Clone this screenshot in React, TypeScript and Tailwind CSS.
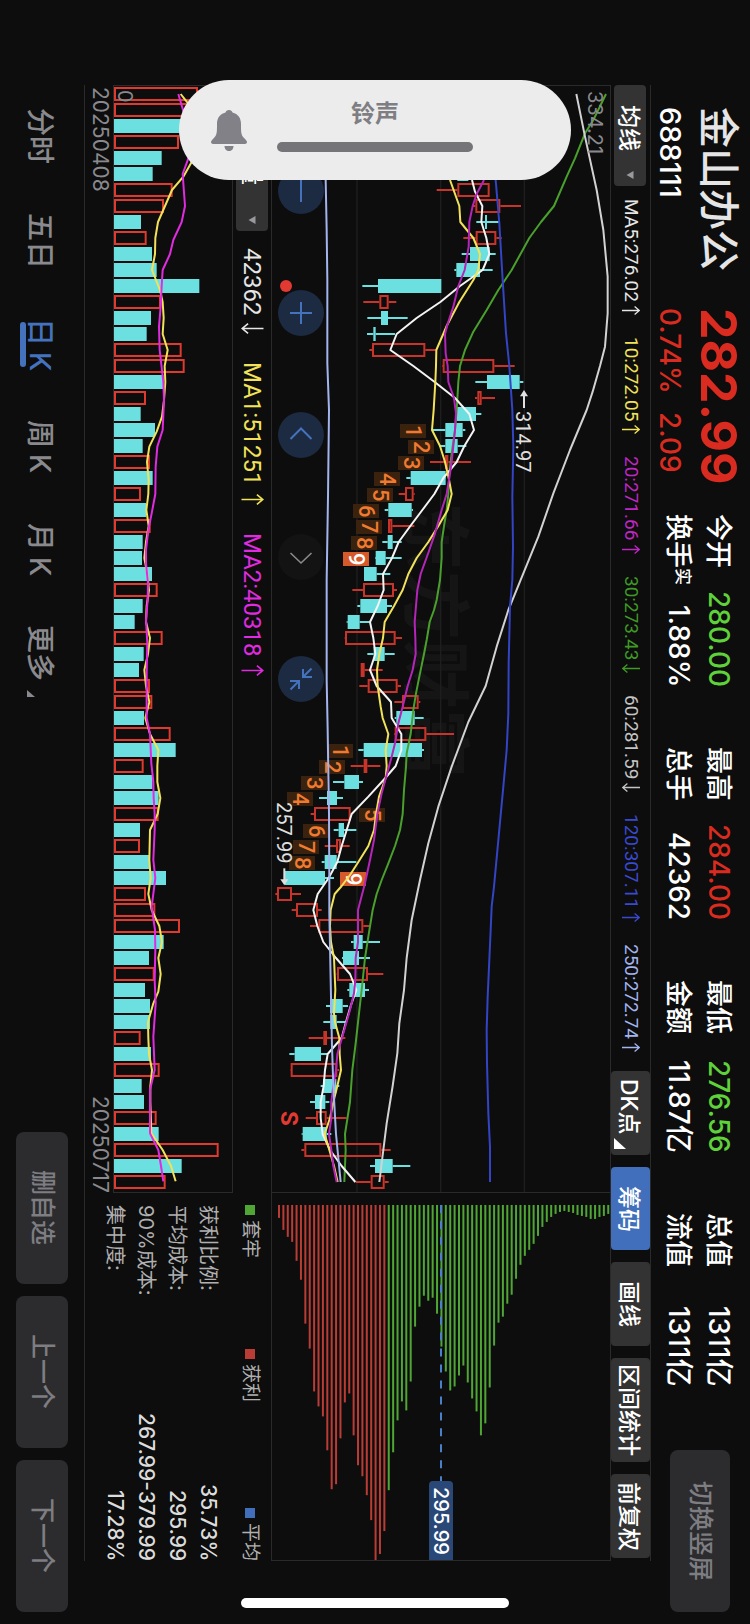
import React from "react";

type Kind = "up" | "down";
type Candle = [Kind, number, number, number, number, number];

// kind, low wick, body start, body end, high wick, volume edge
const candles: Candle[] = [
  ["up", 600, 610, 640, 650, 324],
  ["up", 600, 610, 640, 650, 330],
  ["down", 600, 610, 640, 650, 300],
  ["up", 600, 610, 640, 650, 267],
  ["down", 600, 610, 640, 650, 215],
  ["down", 592, 592, 625, 625, 188],
  ["up", 530, 592, 689, 689, 248],
  ["up", 638, 646, 721, 783, 222],
  ["down", 649, 675, 681, 720, 153],
  ["up", 610, 647, 709, 725, 170],
  ["down", 605, 630, 689, 707, 186],
  ["down", 583, 589, 660, 698, 200],
  ["down", 307, 354, 544, 544, 328],
  ["up", 310, 358, 386, 409, 213],
  ["down", 322, 363, 384, 443, 183],
  ["down", 321, 340, 347, 405, 170],
  ["up", 328, 336, 496, 530, 275],
  ["up", 546, 548, 703, 764, 284],
  ["down", 646, 681, 779, 790, 220],
  ["up", 645, 652, 665, 705, 168],
  ["down", 585, 590, 648, 664, 152],
  ["down", 516, 556, 608, 616, 195],
  ["down", 537, 556, 593, 619, 158],
  ["up", 510, 555, 565, 633, 180],
  ["down", 439, 452, 557, 558, 188],
  ["up", 416, 435, 461, 464, 153],
  ["down", 374, 385, 455, 459, 168],
  ["up", 384, 384, 397, 463, 182],
  ["down", 367, 383, 398, 425, 158],
  ["down", 345, 347, 377, 425, 156],
  ["down", 312, 312, 350, 391, 186],
  ["up", 277, 309, 402, 411, 203],
  ["down", 292, 301, 381, 396, 158],
  ["down", 260, 263, 299, 328, 134],
  ["up", 254, 255, 407, 426, 218],
  ["down", 322, 341, 374, 404, 161],
  ["up", 302, 302, 314, 368, 147],
  ["up", 298, 323, 413, 423, 180],
  ["up", 403, 426, 476, 481, 187],
  ["down", 404, 409, 464, 491, 162],
  ["up", 402, 404, 499, 582, 242],
  ["down", 295, 311, 486, 492, 257],
  ["up", 272, 311, 322, 361, 161],
  ["down", 219, 253, 297, 309, 187],
  ["down", 177, 201, 231, 249, 206],
  ["up", 152, 162, 272, 273, 206],
  ["down", 221, 236, 252, 289, 150],
  ["up", 194, 228, 243, 269, 150],
  ["down", 185, 194, 230, 289, 177],
  ["down", 72, 75, 195, 222, 228],
  ["up", 46, 51, 96, 123, 168],
  ["up", 95, 108, 174, 185, 196],
  ["up", 150, 175, 310, 328, 270],
  ["down", 273, 281, 308, 360, 221],
  ["down", 246, 249, 297, 330, 177],
  ["up", 230, 231, 324, 370, 194],
  ["down", 262, 268, 315, 327, 165],
  ["down", 198, 210, 248, 264, 180],
  ["down", 190, 211, 230, 258, 180],
  ["up", 146, 190, 201, 256, 152],
  ["down", 88, 104, 183, 202, 183],
  ["up", 91, 92, 232, 238, 209],
  ["down", 182, 189, 229, 238, 155],
  ["down", 150, 165, 196, 208, 162],
  ["up", 137, 168, 200, 260, 200],
  ["down", 125, 128, 200, 214, 206],
  ["up", 124, 133, 364, 392, 386],
  ["down", 330, 345, 398, 451, 275],
  ["up", 287, 332, 374, 386, 227],
];

const volumeDownAt = new Set([36]);

const averages = [
  {
    color: "#4aa02c",
    points:
      "1038,42 1000,120 975,160 945,235 920,290 882,378 843,426 808,474 755,570 715,630 680,690 640,755 615,810 600,858 595,906 590,990 585,1050 575,1120 568,1180 565,1242 560,1290 552,1338 545,1386 545,1434 540,1500 530,1560 522,1590 509,1626 500,1680 492,1722 478,1790 468,1840 460,1890 452,1962 440,2020 438,2060 432,2130 428,2202 420,2250 405,2298 385,2350 365,2400 350,2442 338,2490 325,2570 315,2634 305,2730 297,2800 287,2890 277,2970 270,3066 255,3162 257,3210 253,3306",
  },
  {
    color: "#d2d2d2",
    points:
      "949,42 975,170 1010,330 1030,450 1043,590 1043,700 1035,800 1020,858 998,935 980,990 930,1110 880,1240 835,1370 790,1480 745,1590 710,1700 677,1818 625,1926 575,2060 535,2180 505,2290 480,2400 455,2520 440,2634 432,2730 418,2830 412,2920 398,3018 380,3130 370,3210 358,3306",
  },
  {
    color: "#f4f4f4",
    points:
      "636,300 645,335 667,378 664,426 679,474 688,522 668,570 600,618 541,666 470,714 410,762 391,810 460,858 524,906 585,954 628,1002 642,1050 613,1098 590,1146 550,1194 523,1242 487,1290 451,1338 416,1386 396,1434 369,1482 371,1530 353,1578 330,1626 340,1674 346,1722 330,1770 350,1818 393,1866 395,1914 424,1962 424,2010 407,2058 376,2094 325,2150 275,2202 260,2250 245,2298 232,2346 206,2394 173,2442 160,2490 172,2538 190,2586 228,2634 270,2682 289,2730 272,2778 258,2826 245,2874 203,2922 195,2970 191,3018 182,3066 182,3114 188,3162 210,3210 245,3258 286,3306",
  },
  {
    color: "#f2e25a",
    points:
      "570,300 598,378 601,426 640,474 660,522 655,570 640,600 598,666 560,738 529,810 528,858 526,906 521,990 516,1050 540,1098 555,1146 566,1194 575,1242 563,1290 535,1338 505,1386 470,1434 445,1482 428,1530 402,1578 374,1626 369,1674 358,1722 351,1770 353,1818 362,1880 368,1914 385,1962 377,2010 380,2058 377,2094 357,2150 348,2202 342,2250 325,2298 295,2346 270,2385 245,2418 224,2442 212,2490 210,2538 213,2586 222,2634 226,2730 222,2800 225,2826 238,2874 239,2922 243,2970 232,3018 223,3054 210,3114 194,3162 208,3210 222,3258 233,3306",
  },
  {
    color: "#b425b8",
    points:
      "672,300 650,342 638,378 628,426 626,500 614,570 595,618 580,680 562,735 555,762 557,820 563,858 565,906 582,954 588,1000 585,1050 580,1098 575,1146 570,1180 560,1242 545,1290 525,1360 508,1410 482,1482 472,1530 468,1578 464,1626 466,1674 467,1722 458,1770 443,1818 428,1880 415,1930 405,1990 395,2030 380,2085 365,2140 352,2202 342,2280 330,2340 315,2410 294,2490 294,2538 294,2586 287,2634 286,2700 282,2740 270,2790 247,2870 232,2922 228,2970 220,3018 214,3066 214,3114 207,3162 214,3210 220,3258 230,3306",
  },
  {
    color: "#3344c4",
    points:
      "707,300 718,430 728,600 738,760 748,858 757,990 760,1100 757,1250 759,1400 757,1500 750,1580 746,1750 745,1900 740,2010 730,2120 715,2280 702,2420 695,2480 692,2550 683,2750 680,2850 681,2950 685,3100 690,3200 690,3306",
  },
  {
    color: "#a3b4ee",
    points:
      "197,300 200,450 202,600 202,850 207,990 204,1250 200,1500 200,1800 203,1950 207,2200 208,2400 208,2500 212,2700 216,2900 220,3018 228,3162 242,3306",
  },
];

const volumeAverages = [
  {
    color: "#f2e25a",
    points:
      "272,42 290,65 330,110 330,180 305,246 280,290 246,330 225,378 204,426 196,474 195,522 186,570 210,630 218,666 221,714 218,762 233,810 224,858 226,906 222,960 216,1010 200,1055 178,1100 171,1146 176,1200 175,1242 169,1290 176,1338 168,1386 163,1434 172,1482 177,1530 170,1578 168,1626 180,1674 174,1722 163,1770 168,1818 178,1866 166,1914 180,1962 205,2010 202,2058 202,2106 211,2154 203,2202 180,2250 178,2340 182,2394 175,2442 185,2490 208,2538 216,2586 205,2634 212,2682 205,2735 190,2770 174,2826 175,2874 177,2922 186,2970 181,3018 181,3066 184,3160 218,3210 243,3258 257,3304",
  },
  {
    color: "#e02be0",
    points:
      "265,42 285,110 310,160 297,230 278,282 285,378 275,426 250,480 240,522 218,570 215,618 212,680 207,740 209,810 220,906 222,960 218,1050 202,1100 197,1160 196,1242 185,1300 175,1350 168,1410 168,1450 174,1510 173,1560 168,1620 172,1690 170,1780 170,1914 180,1962 184,2050 190,2106 191,2154 194,2202 194,2250 190,2340 196,2394 185,2480 195,2550 196,2610 194,2700 197,2770 190,2870 194,2970 180,3030 180,3160 205,3210 213,3258 220,3304",
  },
];

const chips = [
  13, 25, 32, 37, 56, 75, 119, 144, 187, 202, 212, 246, 285, 280, 234, 198, 189, 231, 261, 272,
  291, 316, 356, 350, 327, 286, 248, 216, 197, 206, 177, 122, 102, 91, 96, 93, 109, 142, 167, 186,
  182, 171, 161, 178, 194, 207, 231, 219, 183, 141, 118, 112, 99, 90, 74, 60, 51, 45, 39, 31, 22,
  17, 12, 9, 7, 6, 7, 8, 10, 11, 12, 14, 14, 12, 11, 9,
];
const profitBars = 25;

// digit, left edge in chart units, candle index
const countMarks: [string, number, number][] = [
  ["1", 421, 21],
  ["2", 443, 22],
  ["3", 415, 23],
  ["4", 343, 24],
  ["5", 321, 25],
  ["6", 278, 26],
  ["7", 288, 27],
  ["8", 272, 28],
  ["9", 249, 29],
  ["1", 200, 41],
  ["2", 176, 42],
  ["3", 123, 43],
  ["4", 82, 44],
  ["5", 297, 45],
  ["6", 130, 46],
  ["7", 98, 47],
  ["8", 88, 48],
  ["9", 241, 49],
];

const rowY = (i: number) => 42 + 48 * i;

function Arrow({ dir, className }: { dir: "up" | "down"; className: string }) {
  return (
    <svg viewBox="0 0 18 9" className={className} fill="none" stroke="currentColor" strokeWidth="1.3">
      {dir === "up" ? <path d="M0 4.5H17.4M12.6 .5L17.4 4.5L12.6 8.5" /> : <path d="M18 4.5H.6M5.4 .5L.6 4.5L5.4 8.5" />}
    </svg>
  );
}

function Quote({ label, note, value, tone }: { label: string; note?: string; value: string; tone?: string }) {
  return (
    <div className="flex flex-row items-center justify-between">
      <dt className="flex flex-row items-start pr-0.5 text-[27px] leading-[26px] font-medium">
        {label}
        {note && <span className="text-[17px] leading-[17px]">{note}</span>}
      </dt>
      <dd className={`text-[28px] leading-[28px] font-medium ${tone ?? "text-white"}`}>{value}</dd>
    </div>
  );
}

function Header() {
  return (
    <header className="flex w-[99px] shrink-0 flex-row items-start pt-[107px] pb-3 text-white">
      <div className="flex h-[201px] flex-col gap-[14px] pr-[11px]">
        <h1 className="text-[41px] leading-[40px] font-medium text-[#e5e5e5]">金山办公</h1>
        <p className="text-[29px] leading-[30px] font-medium">688111</p>
      </div>
      <div className="flex h-[206px] flex-col gap-[14px] pr-[11px] text-[#d92b1f]">
        <p className="text-[50px] leading-[40px] font-bold">282.99</p>
        <p className="flex flex-row gap-[18px] text-[28px] leading-[30px] font-medium">
          <span>0.74%</span>
          <span>2.09</span>
        </p>
      </div>
      <dl className="grid flex-1 grid-cols-4 gap-[60px] pr-[17px]">
        <div className="flex flex-col gap-3">
          <Quote label="今开" value="280.00" tone="text-[#5fd13a]" />
          <Quote label="换手" note="实" value="1.88%" />
        </div>
        <div className="flex flex-col gap-3">
          <Quote label="最高" value="284.00" tone="text-[#d92b1f]" />
          <Quote label="总手" value="42362" />
        </div>
        <div className="flex flex-col gap-3">
          <Quote label="最低" value="276.56" tone="text-[#5fd13a]" />
          <Quote label="金额" value="11.87亿" />
        </div>
        <div className="flex flex-col gap-3">
          <Quote label="总值" value="1311亿" />
          <Quote label="流值" value="1311亿" />
        </div>
      </dl>
      <button className="mt-16 mr-5 h-[162px] w-[60px] rounded-lg bg-[#2c2c2e] text-[25px] font-medium text-[#7d7d82]">
        切换竖屏
      </button>
    </header>
  );
}

function Picker({ label, option, size }: { label: string; option: string; size: string }) {
  return (
    <div className="relative mr-px">
      <select
        aria-label={label}
        className={`block w-8 appearance-none rounded bg-[#333] pr-0.5 pb-4 text-center text-[23px] leading-[30px] font-medium text-white ${size}`}
      >
        <option>{option}</option>
      </select>
      <svg viewBox="0 0 8 8" className="absolute bottom-[7px] left-3 size-2" fill="#9a9a9e">
        <path d="M.5 4L7.5 0V8Z" />
      </svg>
    </div>
  );
}

const maList: [string, "up" | "down", string][] = [
  ["MA5:276.02", "up", "text-[#e6e6e6]"],
  ["10:272.05", "up", "text-[#f2e25a]"],
  ["20:271.66", "up", "text-[#c026c4]"],
  ["30:273.43", "down", "text-[#3f9a25]"],
  ["60:281.59", "down", "text-[#c4c4c4]"],
  ["120:307.11", "up", "text-[#3a4ad0]"],
  ["250:272.74", "up", "text-[#a3b4ee]"],
];

function Toolbar() {
  const tool = "w-[39px] rounded pr-1 text-[23px] leading-[34px] font-medium text-white";
  return (
    <div className="flex w-10 shrink-0 flex-row items-center border-r border-[#2a2a2a] pb-[3px]">
      <Picker label="主图指标" option="均线" size="h-[101px]" />
      <ul className="mt-[13px] flex flex-row gap-[22px] font-['Roboto','Noto_Sans_CJK_SC',sans-serif] text-[19px] leading-[24px] whitespace-nowrap">
        {maList.map(([text, dir, tone]) => (
          <li key={text} className={`flex flex-row items-center gap-1 ${tone}`}>
            {text}
            <Arrow dir={dir} className="h-[9px] w-[18px]" />
          </li>
        ))}
      </ul>
      <div className="mt-auto flex flex-row gap-3">
        <button className={`${tool} relative h-[84px] bg-[#333] pb-3`}>
          DK点
          <svg viewBox="0 0 12 11" className="absolute bottom-1.5 left-[3px] h-[11px] w-3" fill="#fff">
            <path d="M0 0V11H12Z" />
          </svg>
        </button>
        <button className={`${tool} h-[83px] bg-[#416fbb]`}>筹码</button>
        <button className={`${tool} h-[84px] bg-[#333]`}>画线</button>
        <button className={`${tool} h-[104px] bg-[#333]`}>区间统计</button>
        <button className={`${tool} h-[84px] bg-[#333]`}>前复权</button>
      </div>
    </div>
  );
}

function Bar({ kind, x, y, w, color }: { kind: Kind; x: number; y: number; w: number; color: string }) {
  return kind === "down" ? (
    <rect x={x} y={y - 21} width={w} height="42" fill="#6ce0e0" />
  ) : (
    <rect x={x + 3} y={y - 18} width={Math.max(w - 6, 1)} height="36" fill="none" stroke={color} strokeWidth="6" />
  );
}

const roundControl = "flex size-[46px] items-center justify-center rounded-full";

function PriceChart() {
  return (
    <div className="relative w-[340px] shrink-0 border border-[#2a2a2a]">
      <p className="absolute top-[416px] left-[130px] font-['Noto_Sans_CJK_SC',sans-serif] text-[69px] leading-[76px] font-bold whitespace-nowrap text-[#151515]">
        东方财富
      </p>
      <svg viewBox="36 18 1014 3318" preserveAspectRatio="none" className="absolute inset-0 size-full">
        <path d="M291 18V3336M542 18V3336M793 18V3336" stroke="#1e1e1e" strokeWidth="4" />
        {candles.map(([kind, lo, a, b, hi], i) => {
          const y = rowY(i);
          const c = "#c8342a";
          const fill = kind === "up" ? c : "#6ce0e0";
          return (
            <g key={i}>
              {a > lo && <rect x={lo} y={y - 3} width={a - lo} height="6" fill={fill} />}
              {hi > b && <rect x={b} y={y - 3} width={hi - b} height="6" fill={fill} />}
              <Bar kind={kind} x={a} y={y} w={b - a} color={c} />
            </g>
          );
        })}
      </svg>
      {countMarks.map(([digit, left, i]) => (
        <span
          key={i}
          className={`absolute flex h-[14px] w-[26px] items-center justify-center font-['Roboto',sans-serif] text-[22px] leading-[26px] font-medium ${
            digit === "9" ? "bg-[#d6592a] text-white" : "bg-[#3a220f] text-[#f07a30]"
          }`}
          style={{ left: (left - 36) / 3, top: (rowY(i) - 18 - 17) / 3 }}
        >
          {digit}
        </span>
      ))}
      <svg viewBox="36 18 1014 3318" preserveAspectRatio="none" className="absolute inset-0 size-full" fill="none">
        {averages.map((line) => (
          <polyline key={line.color} points={line.points} stroke={line.color} strokeWidth="6" strokeLinejoin="round" />
        ))}
        <g stroke="#e0e0e0" strokeWidth="6">
          <path d="M792 984V945" />
          <path d="M73 2365V2404" />
        </g>
        <path d="M792 930L804 949H780ZM73 2416L85 2398H61Z" fill="#e0e0e0" />
        <circle cx="78" cy="618" r="18" fill="#e23a32" />
      </svg>
      <span className="absolute top-[5px] right-[3px] text-[20px] leading-[24px] text-[#8a8a8e]">334.21</span>
      <span className="absolute top-[325px] left-[239px] font-['Roboto',sans-serif] text-[20px] leading-[24px] text-[#e0e0e0]">
        314.97
      </span>
      <span className="absolute top-[716px] left-0 font-['Roboto',sans-serif] text-[20px] leading-[24px] text-[#e0e0e0]">
        257.99
      </span>
      <span className="absolute top-[1025px] left-1 font-['Roboto',sans-serif] text-[24px] leading-[26px] font-bold text-[#e23a32]">
        S
      </span>
      <div className="absolute top-[82px] left-1.5 flex flex-row gap-[76px] text-[#4472bd]">
        <button aria-label="缩小" className={`${roundControl} bg-[#1c2a42]`}>
          <svg viewBox="0 0 24 24" className="size-6" fill="none" stroke="currentColor" strokeWidth="2">
            <path d="M12 1V23" />
          </svg>
        </button>
        <button aria-label="放大" className={`${roundControl} bg-[#1c2a42]`}>
          <svg viewBox="0 0 24 24" className="size-6" fill="none" stroke="currentColor" strokeWidth="2">
            <path d="M12 1V23M1 12H23" />
          </svg>
        </button>
        <button aria-label="左移" className={`${roundControl} bg-[#1c2a42]`}>
          <svg viewBox="0 0 24 24" className="size-6" fill="none" stroke="currentColor" strokeWidth="2">
            <path d="M1.500 16L12 5.500L22.500 16" />
          </svg>
        </button>
        <button aria-label="右移" className={`${roundControl} bg-[#131313] text-[#8a8a8e]`}>
          <svg viewBox="0 0 24 24" className="size-6" fill="none" stroke="currentColor" strokeWidth="1.600">
            <path d="M1.500 8L12 18L22.500 8" />
          </svg>
        </button>
        <button aria-label="收起" className={`${roundControl} bg-[#1c2a42]`}>
          <svg viewBox="0 0 24 24" className="size-6" fill="none" stroke="currentColor" strokeWidth="2">
            <path d="M22.500 1.500L14 10M14 2V10H23M1.500 22.500L10 14M10 22V14H1" />
          </svg>
        </button>
      </div>
    </div>
  );
}

function VolumeInfo() {
  return (
    <div className="flex w-[38px] shrink-0 flex-row items-center font-['Roboto','Noto_Sans_CJK_SC',sans-serif] text-[24px] leading-[30px]">
      <Picker label="副图指标" option="成交量" size="h-[146px]" />
      <ul className="mt-[17px] flex flex-row gap-7 whitespace-nowrap">
        <li className="flex flex-row items-center gap-2 text-[#e6e6e6]">
          42362
          <Arrow dir="down" className="h-[11px] w-[23px]" />
        </li>
        <li className="flex flex-row items-center gap-2 text-[#f2e25a]">
          MA1:51251
          <Arrow dir="up" className="h-[11px] w-[23px]" />
        </li>
        <li className="flex flex-row items-center gap-2 text-[#e02be0]">
          MA2:40318
          <Arrow dir="up" className="h-[11px] w-[23px]" />
        </li>
      </ul>
    </div>
  );
}

function VolumeChart() {
  return (
    <div className="relative w-[120px] shrink-0 border border-[#2a2a2a]">
      <svg viewBox="72 18 354 3318" preserveAspectRatio="none" className="absolute inset-0 size-full" fill="none">
        {candles.map(([kind, , , , , edge], i) => (
          <Bar key={i} kind={volumeDownAt.has(i) ? "down" : kind} x={72} y={rowY(i)} w={edge - 72} color="#e0392d" />
        ))}
        {volumeAverages.map((line) => (
          <polyline key={line.color} points={line.points} stroke={line.color} strokeWidth="6" strokeLinejoin="round" />
        ))}
      </svg>
      <span className="absolute top-1 left-0 text-[20px] leading-[22px] text-[#8a8a8e]">0</span>
    </div>
  );
}

function ChipChart() {
  return (
    <div className="relative w-[340px] shrink-0 border border-t-0 border-[#2a2a2a]">
      <svg viewBox="0 0 338 368" preserveAspectRatio="none" className="absolute inset-0 size-full">
        {chips.map((length, i) => (
          <rect key={i} x={6 + 4.39 * i} y="12" width="2" height={length} fill={i < profitBars ? "#b93c35" : "#4fa635"} />
        ))}
        <path d="M169 12V290" stroke="#4a7fcc" strokeWidth="2" strokeDasharray="8 8" />
      </svg>
      <span className="absolute right-[157px] bottom-0 flex h-[79px] w-6 items-center justify-center rounded-t bg-[#2a4877] text-[20px] leading-6 font-medium text-white">
        295.99
      </span>
    </div>
  );
}

function ChipSummary() {
  const rows = [
    ["获利比例:", "35.73%"],
    ["平均成本:", "295.99"],
    ["90%成本:", "267.99-379.99"],
    ["集中度:", "17.28%"],
  ];
  return (
    <>
      <ul className="flex w-[38px] shrink-0 flex-row items-center pt-3 pr-1 text-[19px] leading-5 text-[#b0b0b0]">
        <li className="flex flex-row items-center gap-[5px]">
          <span className="size-2.5 bg-[#4fa635]" />
          套牢
        </li>
        <li className="mt-[91px] flex flex-row items-center gap-[5px]">
          <span className="size-2.5 bg-[#b93c35]" />
          获利
        </li>
        <li className="mt-auto flex flex-row items-center gap-[5px]">
          <span className="size-2.5 bg-[#416fbb]" />
          平均
        </li>
      </ul>
      <dl className="flex flex-1 flex-col gap-[11px] pt-3 pr-[15px] text-[20px] leading-5">
        {rows.map(([label, value]) => (
          <div key={label} className="flex flex-row justify-between">
            <dt className="text-[#b0b0b0]">{label}</dt>
            <dd className="text-[21px] font-medium text-[#dcdcdc]">{value}</dd>
          </div>
        ))}
      </dl>
    </>
  );
}

function Footer() {
  const tabs: [string, string][] = [
    ["分时", ""],
    ["五日", ""],
    ["日", "K"],
    ["周", "K"],
    ["月", "K"],
    ["更多", ""],
  ];
  const actions = ["删自选", "上一个", "下一个"];
  return (
    <footer className="flex w-[84px] shrink-0 flex-row items-center justify-between pt-[108px] pb-3">
      <nav className="flex flex-row gap-[49px] pr-1 text-[28px] leading-[30px] font-medium text-[#8a8a8e]">
        {tabs.map(([name, period]) => {
          const active = name === "日";
          return (
            <a key={name} href="#" className={`relative flex flex-row gap-1.5 ${active ? "text-[#4472bd]" : ""}`}>
              {name}
              {period && <span>{period}</span>}
              {active && <span className="absolute top-1 bottom-1 -left-[5px] w-1.5 rounded-full bg-[#4472bd]" />}
              {name === "更多" && (
                <svg viewBox="0 0 8 7" className="absolute -bottom-4 left-0.5 h-[7px] w-2" fill="currentColor">
                  <path d="M0 0V7H8Z" />
                </svg>
              )}
            </a>
          );
        })}
      </nav>
      <div className="flex flex-row gap-3">
        {actions.map((action) => (
          <button
            key={action}
            className="h-[152px] w-[52px] rounded-lg bg-[#2c2c2e] text-[25px] font-medium text-[#7d7d82]"
          >
            {action}
          </button>
        ))}
      </div>
    </footer>
  );
}

function RingerOverlay() {
  return (
    <label className="absolute top-20 left-1/2 h-[100px] w-[392px] -translate-x-1/2 rounded-full bg-[#ececec] [writing-mode:horizontal-tb]">
      <svg viewBox="0 0 36 41" className="absolute top-[30px] left-8 h-[41px] w-9" fill="#828187">
        <path d="M18 0C20 0 21 1 21.500 2.500C27 4 30 8 30 14C30 22 30 25 33 28C35 30 36 31 36 32C36 33 35 34 34 34H2C1 34 0 33 0 32C0 31 1 30 3 28C6 25 6 22 6 14C6 8 9 4 14.500 2.500C15 1 16 0 18 0Z" />
        <path d="M13.500 36H22.500C22.500 39 20.500 41 18 41S13.500 39 13.500 36Z" />
      </svg>
      <div className="flex flex-col items-center pt-5">
        <span className="text-[24px] leading-[28px] font-bold text-[#7e7e83]">铃声</span>
        <input
          type="range"
          defaultValue={100}
          className="mt-[14px] block h-[10px] w-1/2 appearance-none rounded-full bg-[#757478] [&::-webkit-slider-thumb]:size-[10px] [&::-webkit-slider-thumb]:appearance-none"
        />
      </div>
    </label>
  );
}

export default function App() {
  return (
    <main className="relative flex h-screen w-full flex-col overflow-hidden bg-[#0d0d0d] font-['Inter','Noto_Sans_CJK_SC',sans-serif] [writing-mode:vertical-rl] [text-orientation:sideways]">
      <Header />
      <div className="mt-[85px] mb-[63px] flex min-w-0 flex-1 flex-col border-l border-[#2a2a2a]">
        <Toolbar />
        <div className="flex min-w-0 flex-1 flex-row">
          <section className="flex flex-1 flex-col">
            <PriceChart />
            <VolumeInfo />
            <VolumeChart />
            <div className="flex flex-row justify-between pt-0.5 pr-0.5 text-[21px] leading-[22px] text-[#8a8a8e]">
              <time>20250408</time>
              <time>20250717</time>
            </div>
          </section>
          <section className="flex h-[368px] flex-col">
            <ChipChart />
            <ChipSummary />
          </section>
        </div>
      </div>
      <Footer />
      <RingerOverlay />
      <span className="absolute bottom-4 left-1/2 h-2.5 w-[268px] -translate-x-1/2 rounded-full bg-white" />
    </main>
  );
}
